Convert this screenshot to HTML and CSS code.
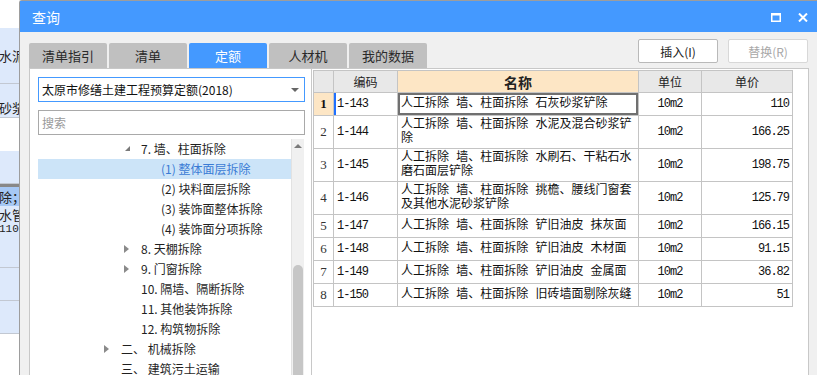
FILE: index.html
```html
<!DOCTYPE html>
<html lang="zh-CN">
<head>
  <meta charset="UTF-8">
  <title>查询</title>
  <link rel="stylesheet" href="styles.css">
</head>
<body>
  <div class="screen">

    <!-- Tabla de la ventana de fondo (solo se ve una franja) -->
    <div class="behind">
      <div class="brow blank h28"></div>
      <div class="brow tall"><span>水泥</span></div>
      <div class="brow mid bottom-text"><span>砂浆</span></div>
      <div class="brow blank h33"></div>
      <div class="brow h33"></div>
      <div class="brow picked"><span>除；</span></div>
      <div class="brow multi"><span>水管</span><span class="small">1101</span></div>
      <div class="brow h33"></div>
      <div class="brow h33"></div>
    </div>

    <!-- Diálogo de consulta -->
    <div class="dialog">
      <div class="titlebar">
        <span class="title">查询</span>
        <div class="win-btns">
          <svg width="10" height="9" viewBox="0 0 10 9">
            <rect x="0.75" y="1" width="8.5" height="7.25" fill="none" stroke="#fff" stroke-width="1.5"/>
            <rect x="0" y="0" width="10" height="2.5" fill="#fff"/>
          </svg>
          <svg width="10" height="9" viewBox="0 0 10 9">
            <path d="M1 0.5 L9 8.5 M9 0.5 L1 8.5" stroke="#fff" stroke-width="2" fill="none"/>
          </svg>
        </div>
      </div>

      <div class="toolbar">
        <div class="tabs">
          <div class="tab">清单指引</div>
          <div class="tab">清单</div>
          <div class="tab active">定额</div>
          <div class="tab">人材机</div>
          <div class="tab">我的数据</div>
        </div>
        <div class="actions">
          <button class="btn">插入(I)</button>
          <button class="btn" disabled>替换(R)</button>
        </div>
      </div>

      <div class="main">
        <!-- Panel izquierdo: libro de cuotas y árbol -->
        <div class="side">
          <div class="select">
            <span>太原市修缮土建工程预算定额(2018)</span>
            <span class="caret"></span>
          </div>
          <div class="search">搜索</div>

          <div class="tree-wrap">
            <ul class="tree">
              <li class="node lv1"><span class="arrow open"></span>7. 墙、柱面拆除</li>
              <li class="node lv2 selected"><span class="arrow"></span>(1) 整体面层拆除</li>
              <li class="node lv2"><span class="arrow"></span>(2) 块料面层拆除</li>
              <li class="node lv2"><span class="arrow"></span>(3) 装饰面整体拆除</li>
              <li class="node lv2"><span class="arrow"></span>(4) 装饰面分项拆除</li>
              <li class="node lv1"><span class="arrow shut"></span>8. 天棚拆除</li>
              <li class="node lv1"><span class="arrow shut"></span>9. 门窗拆除</li>
              <li class="node lv1"><span class="arrow"></span>10. 隔墙、隔断拆除</li>
              <li class="node lv1"><span class="arrow"></span>11. 其他装饰拆除</li>
              <li class="node lv1"><span class="arrow"></span>12. 构筑物拆除</li>
              <li class="node lv0"><span class="arrow shut"></span>二、 机械拆除</li>
              <li class="node lv0"><span class="arrow"></span>三、 建筑污土运输</li>
            </ul>
            <div class="scrollbar">
              <span class="up"></span>
              <div class="thumb"></div>
            </div>
          </div>
        </div>

        <!-- Panel derecho: resultado -->
        <div class="result">
          <table class="grid">
            <colgroup>
              <col class="c-idx"><col class="c-code"><col class="c-name"><col class="c-unit"><col class="c-price">
            </colgroup>
            <thead>
              <tr>
                <th></th>
                <th>编码</th>
                <th class="sorted">名称</th>
                <th>单位</th>
                <th>单价</th>
              </tr>
            </thead>
            <tbody>
              <tr class="one">
                <td class="idx current">1</td>
                <td class="code cursor">1-143</td>
                <td class="name focus">人工拆除 墙、柱面拆除 石灰砂浆铲除</td>
                <td class="unit">10m2</td>
                <td class="price">110</td>
              </tr>
              <tr class="two">
                <td class="idx">2</td>
                <td class="code">1-144</td>
                <td class="name">人工拆除 墙、柱面拆除 水泥及混合砂浆铲除</td>
                <td class="unit">10m2</td>
                <td class="price">166.25</td>
              </tr>
              <tr class="two">
                <td class="idx">3</td>
                <td class="code">1-145</td>
                <td class="name">人工拆除 墙、柱面拆除 水刷石、干粘石水磨石面层铲除</td>
                <td class="unit">10m2</td>
                <td class="price">198.75</td>
              </tr>
              <tr class="two">
                <td class="idx">4</td>
                <td class="code">1-146</td>
                <td class="name">人工拆除 墙、柱面拆除 挑檐、腰线门窗套及其他水泥砂浆铲除</td>
                <td class="unit">10m2</td>
                <td class="price">125.79</td>
              </tr>
              <tr class="one">
                <td class="idx">5</td>
                <td class="code">1-147</td>
                <td class="name">人工拆除 墙、柱面拆除 铲旧油皮 抹灰面</td>
                <td class="unit">10m2</td>
                <td class="price">166.15</td>
              </tr>
              <tr class="one">
                <td class="idx">6</td>
                <td class="code">1-148</td>
                <td class="name">人工拆除 墙、柱面拆除 铲旧油皮 木材面</td>
                <td class="unit">10m2</td>
                <td class="price">91.15</td>
              </tr>
              <tr class="one">
                <td class="idx">7</td>
                <td class="code">1-149</td>
                <td class="name">人工拆除 墙、柱面拆除 铲旧油皮 金属面</td>
                <td class="unit">10m2</td>
                <td class="price">36.82</td>
              </tr>
              <tr class="one">
                <td class="idx">8</td>
                <td class="code">1-150</td>
                <td class="name">人工拆除 墙、柱面拆除 旧砖墙面剔除灰缝</td>
                <td class="unit">10m2</td>
                <td class="price">51</td>
              </tr>
            </tbody>
          </table>
        </div>
      </div>
    </div>

  </div>
</body>
</html>
```

FILE: styles.css
```css
/* ====== BASE ====== */
html, body {
  margin: 0;
  padding: 0;
}

body {
  width: 817px;
  height: 375px;
  overflow: hidden;
  background: #fff;
  font-family: "Noto Sans CJK SC", "Noto Sans", sans-serif;
  font-size: 12px;
  color: #222;
}

.screen {
  display: flex;
  height: 375px;
}

/* ====== VENTANA DE FONDO ====== */
.behind {
  width: 19px;
  flex: none;
  overflow: hidden;
  display: flex;
  flex-direction: column;
}

.brow {
  background: #dde9fb;
  border-bottom: 1px solid #c2c8d2;
  box-sizing: border-box;
  height: 33px;
  display: flex;
  flex-direction: column;
  justify-content: center;
  font-size: 13px;
  line-height: 14px;
  white-space: nowrap;
}
.brow span {
  margin-left: -1px;
}
.brow .small {
  font-family: "Liberation Mono", monospace;
  font-size: 11px;
}
.brow.blank { background: #fff; border-bottom: 0; }
.brow.h28 { height: 28px; }
.brow.tall { height: 56px; }
.brow.mid { height: 34px; }
.brow.bottom-text { justify-content: flex-end; padding-bottom: 2px; }
.brow.picked {
  height: 22px;
  background: #a6c8f5;
  border-top: 3px solid #888;
  border-bottom: 0;
}
.brow.multi {
  height: 62px;
  justify-content: flex-start;
  padding-top: 2px;
}

/* ====== DIÁLOGO ====== */
.dialog {
  flex: 1;
  display: flex;
  flex-direction: column;
  background: #f0f0f0;
  border-left: 1px solid #9d9d9d;
  border-top: 1px solid #9d9d9d;
  border-top-left-radius: 3px;
  min-width: 0;
}

.titlebar {
  height: 31px;
  flex: none;
  background: #4499ff;
  display: flex;
  align-items: center;
  justify-content: space-between;
  padding: 0 9px 0 12px;
}
.title {
  color: #fff;
  font-size: 14px;
  margin-top: 1px;
}
.win-btns {
  display: flex;
  gap: 17px;
  align-items: center;
  margin-top: 1px;
}
.win-btns svg {
  display: block;
}

/* ====== PESTAÑAS Y BOTONES ====== */
.toolbar {
  height: 36px;
  flex: none;
  display: flex;
  justify-content: space-between;
  padding: 0 9px;
}
.tabs {
  display: flex;
  gap: 2px;
  align-self: flex-end;
}
.tab {
  width: 78px;
  height: 25px;
  background: #c0c0c0;
  border-radius: 2px 2px 0 0;
  font-size: 13px;
  line-height: 25px;
  text-align: center;
  color: #2a2a2a;
}
.tab.active {
  background: #4499ff;
  color: #fff;
}

.actions {
  display: flex;
  gap: 10px;
  margin-top: 7px;
}
.btn {
  width: 80px;
  height: 24px;
  background: #fff;
  border: 1px solid #b9b9b9;
  border-radius: 2px;
  font-family: inherit;
  font-size: 12px;
  color: #222;
  padding: 0;
}
.btn:disabled {
  color: #a8a8a8;
  border-color: #d8d8d8;
}

/* ====== CUERPO ====== */
.main {
  flex: 1;
  display: flex;
  padding: 0 8px 0 9px;
  min-height: 0;
}

.side {
  width: 282px;
  flex: none;
  box-sizing: border-box;
  background: #fff;
  border-left: 1px solid #c8c8c8;
  border-top: 1px solid #c8c8c8;
  padding: 8px 6px 0 8px;
  display: flex;
  flex-direction: column;
  overflow: hidden;
}

.select, .search {
  height: 25px;
  flex: none;
  box-sizing: border-box;
  display: flex;
  align-items: center;
  padding: 0 3px;
}
.select {
  border: 1px solid #4499ff;
  justify-content: space-between;
  color: #111;
}
.caret {
  width: 0;
  height: 0;
  border-left: 4px solid transparent;
  border-right: 4px solid transparent;
  border-top: 4px solid #666;
  margin-right: 2px;
}
.search {
  margin-top: 8px;
  border: 1px solid #a9a9a9;
  color: #9a9a9a;
}

/* ====== ÁRBOL ====== */
.tree-wrap {
  flex: 1;
  display: flex;
  margin-top: 4px;
  min-height: 0;
}
.tree {
  list-style: none;
  margin: 0;
  padding: 0;
  width: 253px;
  flex: none;
}
.node {
  height: 20px;
  line-height: 20px;
  display: flex;
  align-items: center;
  white-space: nowrap;
  color: #1f1f1f;
}
.node.lv0 { padding-left: 66px; }
.node.lv1 { padding-left: 86px; }
.node.lv2 { padding-left: 106px; }
.node.selected {
  background: #cce4f8;
  color: #3a7bd5;
}
.arrow {
  width: 17px;
  height: 20px;
  flex: none;
  position: relative;
}
.arrow.shut::before {
  content: "";
  position: absolute;
  left: 0;
  top: 6px;
  border-top: 4px solid transparent;
  border-bottom: 4px solid transparent;
  border-left: 5px solid #8a8a8a;
}
.arrow.open::before {
  content: "";
  position: absolute;
  left: 1px;
  top: 7px;
  border-left: 5px solid transparent;
  border-bottom: 5px solid #7a7a7a;
}

.scrollbar {
  width: 13px;
  flex: none;
  background: #f0f0f0;
  border-left: 1px solid #e2e2e2;
  box-sizing: border-box;
  display: flex;
  flex-direction: column;
  align-items: center;
}
.up {
  margin-top: 5px;
  width: 0;
  height: 0;
  border-left: 4px solid transparent;
  border-right: 4px solid transparent;
  border-bottom: 4px solid #7a7a7a;
}
.thumb {
  margin-top: 117px;
  width: 10px;
  flex: 1;
  background: #c6c6c6;
  border-radius: 5px 5px 0 0;
}

/* ====== RESULTADO ====== */
.result {
  flex: 1;
  background: #fff;
  border: 1px solid #c8c8c8;
  border-bottom: 0;
  padding: 1px 0 0 1px;
  min-width: 0;
}

.grid {
  border-collapse: collapse;
  table-layout: fixed;
  width: 479px;
  font-family: "Liberation Mono", "Noto Sans CJK SC", monospace;
  font-size: 12px;
  color: #111;
}
.c-idx { width: 20px; }
.c-code { width: 64px; }
.c-name { width: 241px; }
.c-unit { width: 63px; }
.c-price { width: 91px; }

.grid th, .grid td {
  border: 1px solid #c4c4c4;
  padding: 0 3px;
  overflow: hidden;
}
.grid th {
  height: 21px;
  background: #e8e8e8;
  font-family: "Noto Sans CJK SC", sans-serif;
  font-weight: normal;
  font-size: 12px;
  color: #222;
}
.grid th.sorted {
  background: #fde6c5;
  font-weight: bold;
  font-size: 14px;
}

.grid tr.one td { height: 22px; }
.grid tr.two td { height: 32px; }

.grid td {
  line-height: 14px;
  vertical-align: middle;
}
.idx {
  text-align: center;
  font-family: "Liberation Serif", serif;
  font-size: 13px;
  color: #333;
  padding: 0 !important;
}
.idx.current {
  background: #fde6c5;
  font-weight: bold;
  color: #111;
}
.code, .unit, .price {
  letter-spacing: -1px;
}
.unit { text-align: center; }
.price { text-align: right; }

.code.cursor {
  box-shadow: inset 2px 0 0 #1f70ff;
}
.name.focus {
  box-shadow: inset 0 0 0 2px #707070;
}
```
